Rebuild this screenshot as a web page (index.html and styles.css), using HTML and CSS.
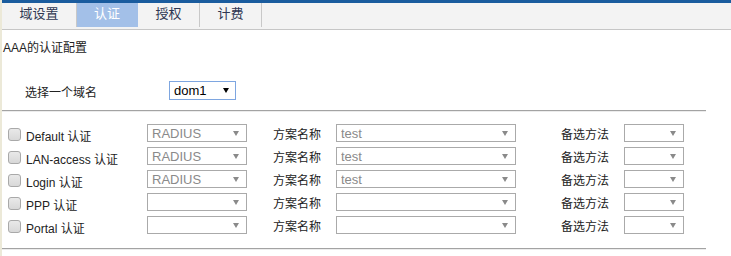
FILE: index.html
```html
<!DOCTYPE html>
<html lang="zh-CN">
<head>
    <meta charset="UTF-8">
    <meta name="viewport" content="width=device-width, initial-scale=1.0">
    <title>AAA的认证配置</title>
    <link rel="stylesheet" href="styles.css">
</head>
<body>
<div class="page">
    <div class="topbar"></div>
    <ul class="tabs">
        <li class="tab tab-first">域设置</li>
        <li class="tab active">认证</li>
        <li class="tab">授权</li>
        <li class="tab">计费</li>
    </ul>

    <div class="title">AAA的认证配置</div>

    <div class="domain-row">
        <span class="domain-label">选择一个域名</span>
        <span class="sel sel-dom"><select><option>dom1</option></select></span>
    </div>

    <hr class="sep">

    <div class="auth-grid">
        <!-- Default -->
        <div class="chk-cell"><input type="checkbox" class="chk"><span>Default 认证</span></div>
        <span class="sel w100"><select disabled><option>RADIUS</option></select></span>
        <span class="lbl">方案名称</span>
        <span class="sel w180"><select disabled><option>test</option></select></span>
        <span class="lbl lbl-alt">备选方法</span>
        <span class="sel w60"><select disabled><option></option></select></span>

        <!-- LAN-access -->
        <div class="chk-cell"><input type="checkbox" class="chk"><span>LAN-access 认证</span></div>
        <span class="sel w100"><select disabled><option>RADIUS</option></select></span>
        <span class="lbl">方案名称</span>
        <span class="sel w180"><select disabled><option>test</option></select></span>
        <span class="lbl lbl-alt">备选方法</span>
        <span class="sel w60"><select disabled><option></option></select></span>

        <!-- Login -->
        <div class="chk-cell"><input type="checkbox" class="chk"><span>Login 认证</span></div>
        <span class="sel w100"><select disabled><option>RADIUS</option></select></span>
        <span class="lbl">方案名称</span>
        <span class="sel w180"><select disabled><option>test</option></select></span>
        <span class="lbl lbl-alt">备选方法</span>
        <span class="sel w60"><select disabled><option></option></select></span>

        <!-- PPP -->
        <div class="chk-cell"><input type="checkbox" class="chk"><span>PPP 认证</span></div>
        <span class="sel w100"><select disabled><option></option></select></span>
        <span class="lbl">方案名称</span>
        <span class="sel w180"><select disabled><option></option></select></span>
        <span class="lbl lbl-alt">备选方法</span>
        <span class="sel w60"><select disabled><option></option></select></span>

        <!-- Portal -->
        <div class="chk-cell"><input type="checkbox" class="chk"><span>Portal 认证</span></div>
        <span class="sel w100"><select disabled><option></option></select></span>
        <span class="lbl">方案名称</span>
        <span class="sel w180"><select disabled><option></option></select></span>
        <span class="lbl lbl-alt">备选方法</span>
        <span class="sel w60"><select disabled><option></option></select></span>
    </div>

    <hr class="sep sep-bottom">
</div>
</body>
</html>
```

FILE: styles.css
```css
body {
    margin: 0;
    font-family: "Liberation Sans", "Noto Sans CJK SC", sans-serif;
    font-size: 12px;
    color: #222;
    background: #fff;
}
.page {
    border-left: 2px solid #ece9d8;
    min-height: 256px;
    box-sizing: border-box;
}
.topbar {
    height: 3px;
    background: #1a5c9e;
}
.tabs {
    display: flex;
    margin: 0;
    padding: 0;
    list-style: none;
    height: 26px;
    background: #f3f3f3;
    border-bottom: 1px solid #c6c6c6;
}
.tab {
    width: 61px;
    height: 24px;
    line-height: 22px;
    text-align: center;
    font-size: 13px;
    color: #2e3752;
    border-right: 1px solid #c8c8c8;
}
.tab-first {
    width: 74px;
}
.tab.active {
    width: 60px;
    background: #a3c0e8;
    color: #fff;
    border-right-color: #a3c0e8;
}
.title {
    margin: 10px 0 0 1px;
    line-height: 16px;
}
.domain-row {
    display: flex;
    align-items: center;
    margin-top: 25px;
    padding-left: 23px;
}
.domain-label {
    width: 144px;
    padding-top: 1px;
}
.sep {
    margin: 10px 25px 0 0;
    border: 0;
    border-top: 1px solid #a3a3a3;
    border-bottom: 1px solid #ececec;
}
.sep-bottom {
    margin-top: 14px;
}
.auth-grid {
    display: grid;
    grid-template-columns: 139px 100px 89px 180px 108px 60px;
    grid-auto-rows: 18px;
    row-gap: 5px;
    align-items: center;
    padding-left: 6px;
    margin-top: 12px;
}
.chk-cell {
    display: flex;
    align-items: center;
    gap: 5px;
    padding-top: 2px;
}
.chk-cell span {
    padding-top: 2px;
}
.chk {
    appearance: none;
    -webkit-appearance: none;
    margin: 0;
    width: 13px;
    height: 13px;
    border: 1px solid #a9a9a9;
    border-radius: 3px;
    background: linear-gradient(#e9e9e9, #d8d8d8);
    box-sizing: border-box;
}
.lbl {
    padding-left: 26px;
}
.lbl-alt {
    padding-left: 45px;
}
.sel {
    position: relative;
    display: block;
    height: 18px;
}
.sel select {
    appearance: none;
    -webkit-appearance: none;
    width: 100%;
    height: 100%;
    margin: 0;
    padding: 0 4px;
    box-sizing: border-box;
    border: 1px solid #aaa;
    border-radius: 0;
    background: #fff;
    font-family: "Liberation Sans", "Noto Sans CJK SC", sans-serif;
    font-size: 13px;
    color: #8a8a8a;
    opacity: 1;
}
.sel::after {
    content: "";
    position: absolute;
    right: 8px;
    top: 7px;
    border-left: 3px solid transparent;
    border-right: 3px solid transparent;
    border-top: 5px solid #8a8a8a;
}
.w100 { width: 100px; }
.w180 { width: 180px; }
.w60 { width: 60px; }
.sel-dom {
    width: 67px;
    height: 19px;
}
.sel-dom select {
    border-color: #7ea6e0;
    color: #000;
}
.sel-dom::after {
    right: 7px;
    top: 7px;
    border-top-color: #000;
}
```
